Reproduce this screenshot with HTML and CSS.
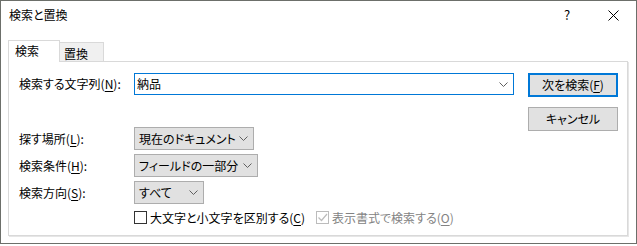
FILE: index.html
```html
<!DOCTYPE html>
<html lang="ja">
<head>
  <meta charset="UTF-8">
  <title>検索と置換</title>
  <link rel="stylesheet" href="styles.css">
</head>
<body>
  <div class="dialog">
    <div class="titlebar">
      <span class="title">検索と置換</span>
      <span class="help">?</span>
      <span class="close">
        <svg width="11" height="11" viewBox="0 0 11 11"><path d="M0.5 0.5 L10.5 10.5 M10.5 0.5 L0.5 10.5" stroke="#000" stroke-width="1" fill="none"/></svg>
      </span>
    </div>

    <div class="content">
      <div class="tabs">
        <div class="tab active">検索</div>
        <div class="tab">置換</div>
      </div>

      <div class="panel">
        <div class="main">
          <div class="row find">
            <span class="label">検索する文字列(<u>N</u>):</span>
            <div class="combo">
              <span>納品</span>
              <svg class="chev" width="9" height="5" viewBox="0 0 9 5"><path d="M0.5 0.5 L4.5 4.5 L8.5 0.5" stroke="#606060" fill="none"/></svg>
            </div>
          </div>

          <div class="options">
            <div class="row">
              <span class="label">探す場所(<u>L</u>):</span>
              <div class="select w1">
                <span>現在のドキュメント</span>
                <svg class="chev" width="9" height="5" viewBox="0 0 9 5"><path d="M0.5 0.5 L4.5 4.5 L8.5 0.5" stroke="#606060" fill="none"/></svg>
              </div>
            </div>
            <div class="row">
              <span class="label">検索条件(<u>H</u>):</span>
              <div class="select w2">
                <span>フィールドの一部分</span>
                <svg class="chev" width="9" height="5" viewBox="0 0 9 5"><path d="M0.5 0.5 L4.5 4.5 L8.5 0.5" stroke="#606060" fill="none"/></svg>
              </div>
            </div>
            <div class="row">
              <span class="label">検索方向(<u>S</u>):</span>
              <div class="select w3">
                <span>すべて</span>
                <svg class="chev" width="9" height="5" viewBox="0 0 9 5"><path d="M0.5 0.5 L4.5 4.5 L8.5 0.5" stroke="#606060" fill="none"/></svg>
              </div>
            </div>
          </div>

          <div class="checks">
            <div class="check first">
              <span class="box"></span>
              <span>大文字と小文字を区別する(<u>C</u>)</span>
            </div>
            <div class="check disabled">
              <span class="box">
                <svg width="11" height="11" viewBox="0 0 11 11"><path d="M1.5 5.5 L4.5 8.5 L10 2" stroke="#bcbcbc" stroke-width="1.2" fill="none"/></svg>
              </span>
              <span>表示書式で検索する(<u>O</u>)</span>
            </div>
          </div>
        </div>

        <div class="buttons">
          <button class="btn default">次を検索(<u>F</u>)</button>
          <button class="btn">キャンセル</button>
        </div>
      </div>
    </div>
  </div>
</body>
</html>
```

FILE: styles.css
```css
* { margin: 0; padding: 0; box-sizing: border-box; }
html, body {
  background: #fff;
  font-family: "Noto Sans CJK JP", "Noto Sans", sans-serif;
  font-size: 12px;
  line-height: 16px;
  color: #000;
  font-feature-settings: "palt";
}
u { text-decoration-thickness: 1px; text-underline-offset: 2px; }

.dialog {
  width: 637px;
  height: 244px;
  border: 1px solid #6c6f6a;
  background: #fff;
  display: flex;
  flex-direction: column;
}

.titlebar {
  height: 28px;
  display: flex;
  align-items: center;
}
.title {
  padding-left: 8px;
  flex: 1;
}
.help, .close {
  width: 46px;
  height: 28px;
  display: flex;
  align-items: center;
  justify-content: center;
}
.help { font-size: 13px; }

.content {
  margin-top: 11px;
  padding: 0 8px 0 7px;
}

.tabs {
  position: relative;
  display: flex;
  align-items: flex-end;
  height: 22px;
  margin-bottom: -1px;
}
.tab {
  height: 20px;
  width: 44px;
  padding: 3px 0 0 4px;
  background: #f0f0f0;
  border: 1px solid #d9d9d9;
  border-left: none;
}
.tab.active {
  height: 22px;
  width: 52px;
  padding: 2px 0 0 6px;
  background: #fff;
  border: 1px solid #d9d9d9;
  border-bottom: none;
}

.panel {
  height: 175px;
  border: 1px solid #d9d9d9;
  box-shadow: 1px 1px 0 #e6e6e6;
  padding: 11px 9px 0 10px;
  display: flex;
}
.main {
  flex: 1;
}
.row {
  display: flex;
  align-items: center;
  height: 23px;
}
.row.find { height: 22px; }
.label {
  width: 115px;
}

.combo {
  width: 380px;
  height: 22px;
  border: 1px solid #0078d7;
  display: flex;
  align-items: center;
  justify-content: space-between;
  padding: 0 5px 0 2px;
}

.options {
  margin-top: 32px;
  display: flex;
  flex-direction: column;
  gap: 4px;
}
.select {
  height: 23px;
  background: #e1e1e1;
  border: 1px solid #adadad;
  display: flex;
  align-items: center;
  justify-content: space-between;
  padding: 0 5px 0 4px;
}
.w1 { width: 120px; }
.w2 { width: 124px; }
.w3 { width: 70px; }

.checks {
  margin-top: 7px;
  margin-left: 115px;
  display: flex;
  align-items: center;
  height: 13px;
}
.check {
  display: flex;
  align-items: center;
  gap: 3px;
}
.check.first { width: 182px; }
.box {
  width: 13px;
  height: 13px;
  border: 1px solid #333;
  background: #fff;
  display: flex;
  align-items: center;
  justify-content: center;
}
.check.disabled { color: #838383; }
.check.disabled .box { border-color: #bcbcbc; }

.buttons {
  width: 90px;
  margin-left: 13px;
  display: flex;
  flex-direction: column;
  gap: 10px;
}
.btn {
  height: 24px;
  width: 90px;
  background: #e1e1e1;
  border: 1px solid #adadad;
  font-family: inherit;
  font-size: 12px;
  line-height: 16px;
  color: #000;
  font-feature-settings: "palt";
}
.btn.default {
  border: 2px solid #0078d7;
}
```
